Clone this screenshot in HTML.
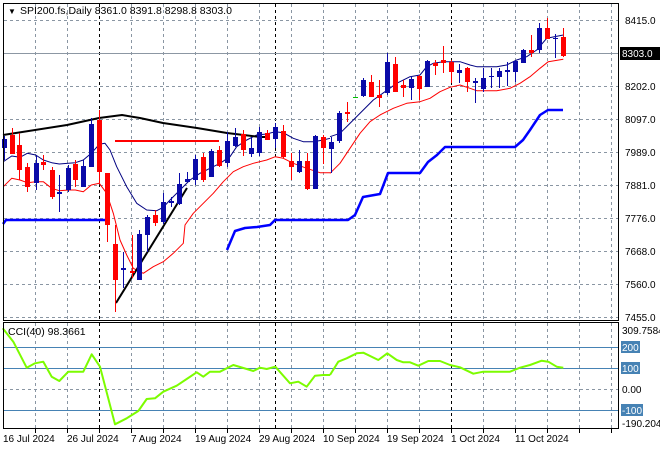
<!DOCTYPE html>
<html><head><meta charset="utf-8"><style>
html,body{margin:0;padding:0;background:#fff;width:660px;height:450px;overflow:hidden}
svg{display:block;font-family:"Liberation Sans",sans-serif;font-size:10px}
</style></head><body>
<svg id="s" width="660" height="450" xmlns="http://www.w3.org/2000/svg">
<g id="grid"></g>
<line x1="3" y1="53.5" x2="619" y2="53.5" stroke="#8c97a3" stroke-width="1"/>
<g id="ind"></g>
<g id="cs"></g>
<rect x="3.5" y="3.5" width="615" height="317" fill="none" stroke="#000"/>
<rect x="3.5" y="322.5" width="615" height="106" fill="none" stroke="#000"/>
<text x="8" y="14" font-size="8">▼</text>
<text x="20" y="14" font-size="10.5">SPI200.fs,Daily  8361.0 8391.8 8298.8 8303.0</text>
<text x="8" y="335" font-size="10.5">CCI(40) 98.3661</text>
<g font-size="10" fill="#000">
<text x="625" y="24">8415.0</text>
<rect x="620" y="47" width="40" height="13" fill="#000"/>
<text x="622" y="57" fill="#fff">8303.0</text>
<text x="625" y="90">8202.0</text>
<text x="625" y="123">8097.0</text>
<text x="625" y="156">7989.0</text>
<text x="625" y="189">7881.0</text>
<text x="625" y="222">7776.0</text>
<text x="625" y="255">7668.0</text>
<text x="625" y="288">7560.0</text>
<text x="625" y="321">7455.0</text>
<text x="622" y="334">309.7584</text>
<rect x="621" y="341" width="19" height="12" fill="#4682b4"/><text x="622" y="351" fill="#fff">200</text>
<rect x="621" y="362" width="19" height="12" fill="#4682b4"/><text x="622" y="372" fill="#fff">100</text>
<text x="622" y="393">0.00</text>
<rect x="621" y="404" width="22" height="12" fill="#4682b4"/><text x="622" y="414" fill="#fff">-100</text>
<text x="622" y="427">-190.204</text>
</g>
<g font-size="10" id="dates">
<text x="3" y="442">16 Jul 2024</text>
<text x="67" y="442">26 Jul 2024</text>
<text x="131" y="442">7 Aug 2024</text>
<text x="195" y="442">19 Aug 2024</text>
<text x="259" y="442">29 Aug 2024</text>
<text x="323" y="442">10 Sep 2024</text>
<text x="387" y="442">19 Sep 2024</text>
<text x="451" y="442">1 Oct 2024</text>
<text x="515" y="442">11 Oct 2024</text>
</g>
</svg>
<script>
var NS="http://www.w3.org/2000/svg";
function el(p,t,a){var e=document.createElementNS(NS,t);for(var k in a)e.setAttribute(k,a[k]);p.appendChild(e);return e;}
var g=document.getElementById('grid'),ind=document.getElementById('ind'),cs=document.getElementById('cs');
var gx=[35,67,99,131,163,195,227,259,291,323,355,387,419,451,483,515,547,579,611];
gx.forEach(function(x){var blk=(x==99||x==451);
 el(g,'line',{x1:x+.5,y1:4,x2:x+.5,y2:320,stroke:blk?'#000':'#8a96a3','stroke-dasharray':'3,3'});
 el(g,'line',{x1:x+.5,y1:323,x2:x+.5,y2:428,stroke:blk?'#000':'#8a96a3','stroke-dasharray':'3,3'});
 el(g,'line',{x1:x+.5,y1:429,x2:x+.5,y2:433,stroke:'#000'});});
el(g,'line',{x1:275.5,y1:4,x2:275.5,y2:320,stroke:'#000','stroke-dasharray':'3,3'});
el(g,'line',{x1:275.5,y1:323,x2:275.5,y2:428,stroke:'#000','stroke-dasharray':'3,3'});
[20,86,119,152,185,218,251,284,317].forEach(function(y){el(g,'line',{x1:4,y1:y+.5,x2:619,y2:y+.5,stroke:'#8a96a3','stroke-dasharray':'3,3'});});
el(g,'line',{x1:4,y1:389.5,x2:619,y2:389.5,stroke:'#8a96a3','stroke-dasharray':'3,3'});
[347,368,410].forEach(function(y){el(g,'line',{x1:4,y1:y+.5,x2:619,y2:y+.5,stroke:'#4682b4'});});
function pl(par,pts,col,w,ox,oy,sc){var s=pts.map(function(p){return ((p[0]/(sc||1))+(ox||0)).toFixed(1)+','+((p[1]/(sc||1))+(oy||0)).toFixed(1)}).join(' ');
 el(par,'polyline',{points:s,fill:'none',stroke:col,'stroke-width':w,'stroke-linejoin':'round'});}
// CCI
pl(ind,[[8,310],[40,350],[80,428],[105,415],[130,410],[155,455],[178,468],[205,440],[250,440],[275,388],[300,425],[345,598],[380,580],[415,558],[440,522],[465,520],[490,500],[530,482],[560,462],[590,442],[610,455],[630,440],[660,440],[700,420],[740,432],[760,438],[780,428],[800,432],[826,425],[870,475],[895,470],[920,485],[945,452],[970,450],[990,450]],'#7cfc00',2,0,225,3);
pl(ind,[[0,450],[25,410],[50,400],[80,385],[100,383],[145,405],[172,385],[200,405],[220,412],[240,412],[265,422],[295,408],[330,408],[360,420],[390,427],[430,446],[460,440],[540,440],[570,428],[600,420],[635,407],[655,410],[680,425],[700,428]],'#7cfc00',2,330,225,3);
// blue step lines
pl(cs,[[3,224],[6,220],[107,220]],'#0000ff',2.5);
pl(cs,[[227,250],[235,231],[245,228],[257,227],[270,225],[275,220],[348,220],[355,215],[363,197],[380,194],[388,173],[420,173],[428,162],[437,155],[445,147],[515,147],[523,140],[530,130],[540,115],[548,110],[563,110]],'#0000ff',2.5);
// MAs
pl(cs,[[10,485],[35,468],[60,472],[82,460],[107,465],[130,480],[155,488],[178,492],[205,490],[226,488],[250,480],[274,460],[298,433],[315,430],[330,450],[350,500],[380,560],[410,610],[440,630],[470,632],[490,622],[510,600],[540,570],[570,540],[600,520],[630,505],[660,490],[690,470],[710,440],[740,420],[770,405],[800,402],[826,395],[850,398],[880,415],[910,425],[940,425],[970,420],[990,415]],'#000080',1,0,0,3);
pl(cs,[[0,410],[30,400],[70,360],[100,330],[130,300],[165,275],[200,250],[240,230],[270,225],[290,200],[310,190],[340,185],[390,185],[420,195],[440,200],[500,200],[530,195],[560,180],[590,170],[620,150],[650,115],[700,105]],'#000080',1,330,0,3);
pl(cs,[[10,560],[35,535],[60,540],[82,548],[107,545],[130,545],[155,565],[178,572],[205,570],[226,570],[250,575],[274,555],[298,550],[320,580],[340,640],[350,680],[360,720],[380,765],[400,805],[430,820],[460,800],[490,785],[520,760],[550,730],[555,675],[580,640],[610,610],[640,580],[670,545],[700,515],[730,500],[760,490],[800,480],[826,470],[850,475],[880,490],[920,505],[960,518],[990,518]],'#ff0000',1,0,0,3);
pl(cs,[[0,520],[30,490],[60,445],[90,400],[120,365],[150,345],[190,325],[230,310],[270,305],[300,295],[330,275],[360,262],[390,255],[420,265],[440,272],[500,272],[540,265],[570,250],[600,230],[630,205],[655,185],[700,178]],'#ff0000',1,330,0,3);
// black lines
pl(cs,[[3,135],[67,125],[99,118],[122,115],[140,118],[163,123],[197,128],[227,133],[260,137],[267,137]],'#000',2);
pl(cs,[[116,303],[187,188]],'#000',2);
el(cs,'line',{x1:115,y1:141,x2:219,y2:141,stroke:'#ff0000','stroke-width':2});
// candles [x,bodyTop,bodyBot,wickTop,wickBot,color]
var B='#0a0aa8',R='#ff0000',G='#00c000';
var c=[[4,139,148,136,160,B],[11.7,135,154,128,154,R],[19.3,145,170,133,180,R],[27.3,167,187,163,192,R],[35.7,163,183,155,190,B],[43.3,162,165,155,170,R],[51.7,170,197,167,199,R],[59.3,192,194,175,212,B],[67.7,168,190,165,192,B],[75.3,164,180,160,187,R],[83.3,166,187,160,187,B],[91.3,124,167,118,167,B],[99.3,120,172,110,183,R],[107.3,173,225,173,242,R],[115,244,280,225,312,R],[123.3,268,270,252,288,B],[131.7,271,273,235,278,R],[139.3,234,280,230,280,B],[147.3,217,235,215,252,B],[155.3,215,223,210,226,R],[163.3,202,222,193,224,B],[171,201,203,197,207,B],[179,184,204,173,205,B],[187,179,182,172,182,B],[195,159,180,155,185,B],[203,157,180,153,182,R],[211,151,177,149,177,B],[219,150,166,146,167,R],[227,141,163,132,167,B],[235,137,146,128,147,B],[243,134,150,130,156,R],[251,148,154,137,157,B],[259,132,153,127,156,B],[267,133,140,130,140,R],[275,127,139,123,148,B],[283,131,157,125,158,R],[291,161,167,153,180,R],[299,161,172,150,173,B],[307,161,189,153,190,R],[315,136,189,135,189,B],[323,137,148,135,164,R],[331,142,149,137,173,B],[339,113,141,111,143,B],[347,112,114,102,122,R],[355,97,97.5,97,97,G],[363,80,96,78,97,B],[371,82,97,75,97,R],[379,95,98,80,107,R],[387,62,93,53,95,B],[395,64,92,57,92,R],[403,85,88,80,97,R],[411,79,88,76,100,B],[419,76,89,75,100,R],[427,61,87,60,87,B],[435,63,66,60,75,R],[443,60,63,46,73,R],[451,62,72,60,83,R],[459,70,73,64,83,B],[467,68,82,67,92,R],[475,81,83,78,103,B],[483,78,89,68,92,B],[491,76,77,68,88,B],[499,71,77,68,88,B],[507,70,72,62,86,B],[515,61,72,60,82,B],[523,50,63,49,63,B],[531,50,53,35,57,R],[539,28,50,23,53,B],[547,28,39,18,39,R],[555,38,39,34,58,B],[563,37,56,28,57,R]];
c.forEach(function(k){var x=Math.round(k[0]);
 el(cs,'line',{x1:x+.5,y1:k[3],x2:x+.5,y2:k[4],stroke:k[5],'stroke-width':1});
 var h=Math.max(1,k[2]-k[1]);
 el(cs,'rect',{x:x-2,y:k[1],width:5,height:h,fill:k[5]});});
</script>
</body></html>
